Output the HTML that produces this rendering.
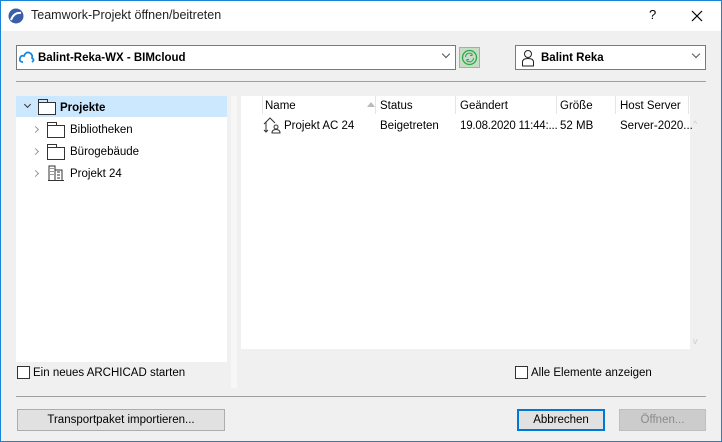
<!DOCTYPE html><html><head><style>
*{box-sizing:border-box}
body{margin:0;width:722px;height:442px;overflow:hidden;font-family:"Liberation Sans",sans-serif;font-size:11.5px;line-height:20px;color:#000}
.win{position:absolute;left:0;top:0;width:722px;height:442px;box-shadow:inset 0 0 0 1px #1883d7;background:#f0f0f0}
.title{position:absolute;left:1px;top:1px;width:720px;height:30px;background:#fff}
.a{position:absolute;white-space:nowrap}
.combo{position:absolute;background:#fff;border:1px solid #7a7a7a;height:25px;top:45px}
.chev{position:absolute;right:6px;top:5px;width:6px;height:6px;border-right:1px solid #555;border-bottom:1px solid #555;transform:rotate(45deg)}
.btn{position:absolute;top:409px;height:22px;background:#e1e1e1;border:1px solid #adadad;text-align:center;line-height:21px}
.cb{position:absolute;width:13px;height:13px;border:1px solid #333;background:#fff}
.arrow{position:absolute;width:5px;height:5px;border-right:1px solid #999;border-bottom:1px solid #999;transform:rotate(-45deg)}
.folder{position:absolute;width:18px;height:13px;border:1px solid #333;background:#fff}
.folder:before{content:"";position:absolute;left:-1px;top:-4px;width:8px;height:3px;border:1px solid #333;border-bottom:none}
</style></head><body><div class="win">
<div class="title">
<svg class="a" style="left:7px;top:7px" width="16" height="16"><circle cx="8" cy="8" r="7.5" fill="#3a5fa8"/><path d="M3 12 Q6 4 13 5" stroke="#fff" stroke-width="2" fill="none"/></svg>
<div class="a" style="left:30px;top:4px;font-size:12.5px;color:#222">Teamwork-Projekt öffnen/beitreten</div>
<div class="a" style="left:648px;top:4px;font-size:13px">?</div>
<svg class="a" style="left:690px;top:9px" width="12" height="12"><path d="M1 1L11 11M11 1L1 11" stroke="#000" stroke-width="1.2"/></svg>
</div>
<div class="combo" style="left:16px;width:440px">
<svg class="a" style="left:2px;top:5px" width="16" height="12"><path d="M4 11 Q0 11 1 7 Q2 4 5 5 Q7 0 11 2 Q14 4 13 7 Q16 9 13 11" stroke="#1a88e0" stroke-width="1.8" fill="none"/></svg>
<div class="a" style="left:21px;top:2px;font-weight:bold">Balint-Reka-WX - BIMcloud</div><div class="chev"></div></div>
<div class="a" style="left:459px;top:47px;width:21px;height:21px;background:#c8dcc8;border:1px solid #9ab79a"><svg width="19" height="19"><circle cx="9.5" cy="9.5" r="7" stroke="#2aa84a" stroke-width="1.3" fill="none"/><path d="M5.5 9a4 4 0 0 1 7-2.5M12 5.5v2h-2M13.5 10a4 4 0 0 1-7 2.5M7 13.5v-2h2" stroke="#2aa84a" fill="none"/></svg></div>
<div class="combo" style="left:515px;width:191px">
<svg class="a" style="left:5px;top:3px" width="14" height="18"><circle cx="7" cy="5" r="3.5" stroke="#222" fill="none"/><path d="M1.5 17V13Q1.5 9.5 7 9.5Q12.5 9.5 12.5 13V17Z" stroke="#222" fill="none"/></svg>
<div class="a" style="left:25px;top:2px;font-weight:bold">Balint Reka</div><div class="chev"></div></div>
<div class="a" style="left:16px;top:81px;width:690px;height:1px;background:#a0a0a0"></div>
<div class="a" style="left:16px;top:96px;width:211px;height:266px;background:#fff">
<div class="a" style="left:0;top:0;width:211px;height:21px;background:#cce8ff"></div>
<div class="arrow" style="left:9px;top:6px;border-color:#333;transform:rotate(45deg)"></div>
<div class="folder" style="left:22px;top:6px"></div><div class="a" style="left:44px;top:2px;font-weight:bold">Projekte</div>
<div class="arrow" style="left:17px;top:31px"></div><div class="folder" style="left:31px;top:29px"></div><div class="a" style="left:54px;top:24px">Bibliotheken</div>
<div class="arrow" style="left:17px;top:53px"></div><div class="folder" style="left:31px;top:51px"></div><div class="a" style="left:54px;top:46px">Bürogebäude</div>
<div class="arrow" style="left:17px;top:75px"></div>
<svg class="a" style="left:31px;top:69px" width="18" height="16"><path d="M1 15.5H17M2 15V1H8V15M8 5H15V15M4 3v1M6 3v1M4 6v1M6 6v1M4 9v1M6 9v1M10 7h3M10 10h3M10 13h3" stroke="#333" fill="none"/></svg>
<div class="a" style="left:54px;top:68px">Projekt 24</div></div>
<div class="a" style="left:231px;top:96px;width:6px;height:292px;background:#f7f7f7"></div>
<div class="a" style="left:241px;top:96px;width:449px;height:253px;background:#fff">
<div class="a" style="left:21px;top:0;width:1px;height:18px;background:#e5e5e5"></div>
<div class="a" style="left:24px;top:0px">Name</div>
<div class="a" style="left:126px;top:6px;width:0;height:0;border-left:4px solid transparent;border-right:4px solid transparent;border-bottom:5px solid #bbb"></div>
<div class="a" style="left:134px;top:0;width:1px;height:18px;background:#e5e5e5"></div><div class="a" style="left:139px;top:0px">Status</div>
<div class="a" style="left:214px;top:0;width:1px;height:18px;background:#e5e5e5"></div><div class="a" style="left:219px;top:0px">Geändert</div>
<div class="a" style="left:315px;top:0;width:1px;height:18px;background:#e5e5e5"></div><div class="a" style="left:319px;top:0px">Größe</div>
<div class="a" style="left:374px;top:0;width:1px;height:18px;background:#e5e5e5"></div><div class="a" style="left:379px;top:0px">Host Server</div>
<div class="a" style="left:447px;top:0;width:1px;height:18px;background:#e5e5e5"></div>
<svg class="a" style="left:22px;top:20px" width="20" height="18"><path d="M1 8L7 2L12 7M3 6V16M1 14L3 16L5 14" stroke="#333" fill="none"/><circle cx="13" cy="11" r="2" stroke="#333" fill="none"/><path d="M9 17Q9 13.5 13 13.5Q17 13.5 17 17Z" stroke="#333" fill="none"/></svg>
<div class="a" style="left:43px;top:20px">Projekt AC 24</div>
<div class="a" style="left:139px;top:20px">Beigetreten</div>
<div class="a" style="left:219px;top:20px;letter-spacing:-0.2px">19.08.2020 11:44:...</div>
<div class="a" style="left:319px;top:20px">52 MB</div>
<div class="a" style="left:379px;top:20px">Server-2020...</div></div>
<div class="a" style="left:693px;top:114px;color:#ccc;font-size:9px">^</div>
<div class="a" style="left:693px;top:331px;color:#ccc;font-size:9px">v</div>
<div class="cb" style="left:17px;top:366px"></div><div class="a" style="left:33px;top:363px">Ein neues ARCHICAD starten</div>
<div class="cb" style="left:515px;top:366px"></div><div class="a" style="left:531px;top:363px">Alle Elemente anzeigen</div>
<div class="a" style="left:16px;top:396px;width:690px;height:1px;background:#a0a0a0"></div>
<div class="btn" style="left:17px;width:208px">Transportpaket importieren...</div>
<div class="btn" style="left:517px;width:88px;border:2px solid #0078d7;line-height:19px">Abbrechen</div>
<div class="btn" style="left:619px;width:87px;background:#ccc;border-color:#bfbfbf;color:#8a8a8a">Öffnen...</div>
</div></body></html>
